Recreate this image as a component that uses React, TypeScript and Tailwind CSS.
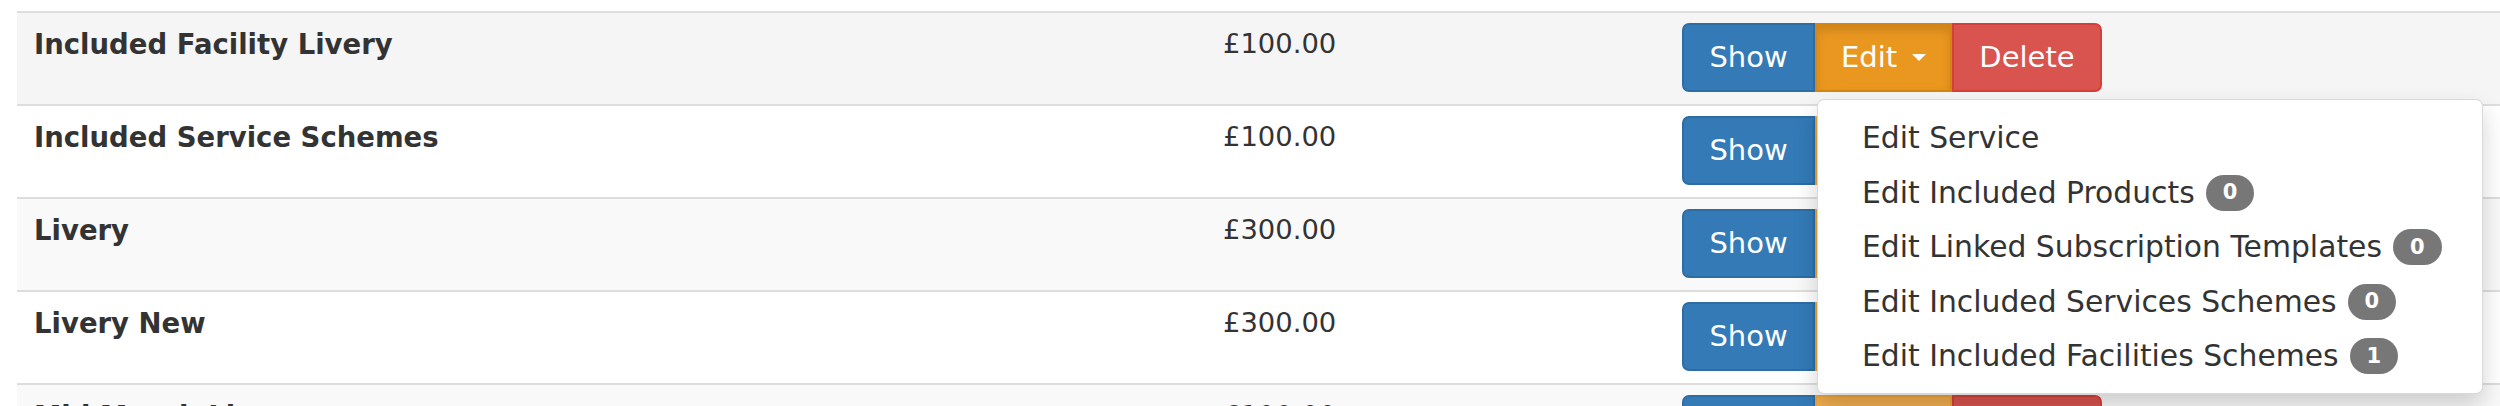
import React from "react";

type Row = { name: string; price: string; bg: string };

const rows: Row[] = [
  { name: "Included Facility Livery", price: "£100.00", bg: "bg-[#f5f5f5]" },
  { name: "Included Service Schemes", price: "£100.00", bg: "bg-white" },
  { name: "Livery", price: "£300.00", bg: "bg-[#f9f9f9]" },
  { name: "Livery New", price: "£300.00", bg: "bg-white" },
  { name: "Mid Month Livery", price: "£100.00", bg: "bg-[#f9f9f9]" },
];

const menu: { label: string; badge?: string }[] = [
  { label: "Edit Service" },
  { label: "Edit Included Products", badge: "0" },
  { label: "Edit Linked Subscription Templates", badge: "0" },
  { label: "Edit Included Services Schemes", badge: "0" },
  { label: "Edit Included Facilities Schemes", badge: "1" },
];

const sans = "font-['DejaVu_Sans',Verdana,sans-serif]";

function Buttons({ open }: { open: boolean }) {
  return (
    <div className={`flex mt-[10px] h-[69px] text-[29px] text-white ${sans}`}>
      <div className="w-[133px] h-full flex items-center justify-center bg-[#337ab7] border-2 border-[#2e6da4] rounded-l-[7px]">
        Show
      </div>
      <div
        className={`w-[137px] h-full flex items-center justify-center border-2 ${
          open
            ? "bg-[#ea971f] border-[#d58512] shadow-[inset_0_6px_10px_rgba(0,0,0,0.125)]"
            : "bg-[#f0ad4e] border-[#eea236]"
        }`}
      >
        <span>Edit</span>
        <span className="ml-[15px] w-0 h-0 border-l-[7px] border-r-[7px] border-t-[7px] border-l-transparent border-r-transparent border-t-white" />
      </div>
      <div className="w-[150px] h-full flex items-center justify-center bg-[#d9534f] border-2 border-[#d43f3a] rounded-r-[7px]">
        Delete
      </div>
    </div>
  );
}

export default function App() {
  return (
    <div className="relative w-[2500px] h-[406px] overflow-hidden bg-white text-[#333333]">
      <div className="pt-[11px] pl-[17px]">
        {rows.map((r, i) => (
          <div
            key={i}
            className={`flex h-[93px] border-t-2 border-[#dddddd] ${r.bg}`}
          >
            <div className="w-[1206px] pl-[17px] pt-[11px]">
              <div className={`${sans} font-bold text-[27.5px] leading-[40px]`}>
                {r.name}
              </div>
            </div>
            <div className="w-[459px] pt-[10.5px]">
              <div className={`${sans} text-[27.4px] leading-[40px]`}>{r.price}</div>
            </div>
            <Buttons open={i === 0} />
          </div>
        ))}
      </div>

      <div className="absolute left-[1817px] top-[99px] w-[666px] bg-white border border-[rgba(0,0,0,0.15)] rounded-[7px] shadow-[0_12px_24px_rgba(0,0,0,0.175)] pt-[11px] pb-[9px]">
        {menu.map((m, i) => (
          <div
            key={i}
            className={`flex items-center pl-[44px] py-[6px] text-[29.8px] leading-[42.5px] text-[#333333] ${sans}`}
          >
            <span>{m.label}</span>
            {m.badge && (
              <span className="ml-[11px] inline-flex items-center justify-center h-[36px] px-[17px] rounded-full bg-[#777777] text-white font-bold text-[21px] leading-none">
                {m.badge}
              </span>
            )}
          </div>
        ))}
      </div>
    </div>
  );
}
